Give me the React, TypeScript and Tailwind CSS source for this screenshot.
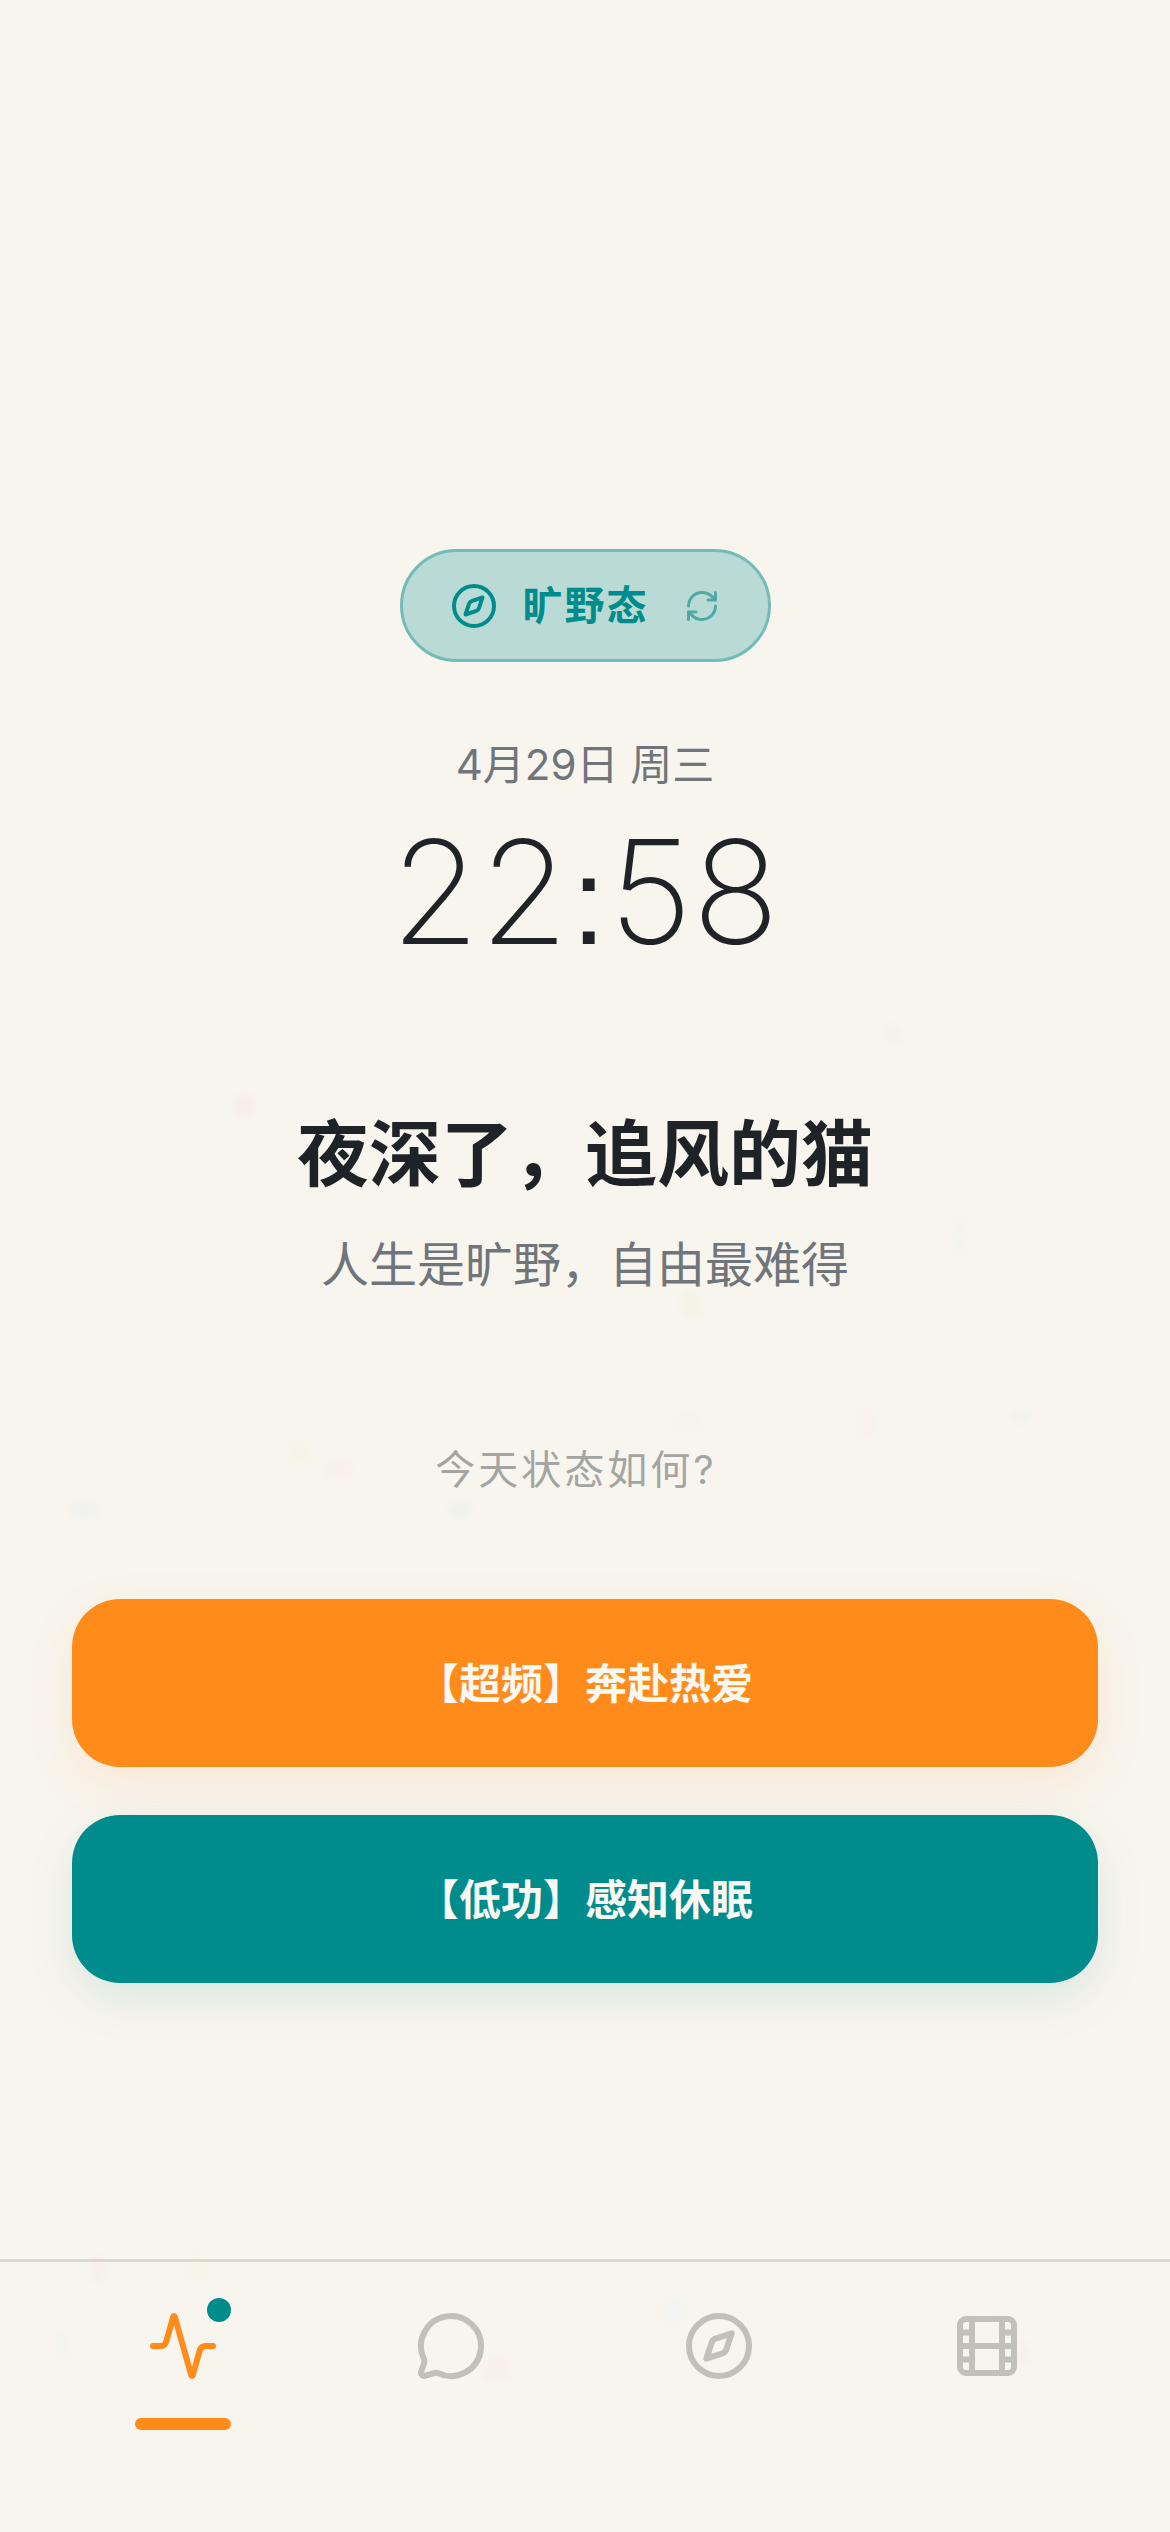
import { Activity, Compass, Film, MessageCircle, RefreshCw } from "lucide-react";

const specks = [
  "left-[234px] top-[1094px] h-[22px] w-[20px] bg-[#f8eee8]",
  "left-[886px] top-[1024px] h-[20px] w-[18px] bg-[#f3f2ed]",
  "left-[954px] top-[1218px] h-[36px] w-[12px] bg-[#f4f3ee]",
  "left-[680px] top-[1293px] h-[24px] w-[22px] bg-[#f5f2e7]",
  "left-[677px] top-[1410px] h-[23px] w-[23px] bg-[#f4f3ee]",
  "left-[860px] top-[1407px] h-[30px] w-[13px] bg-[#f8f1ec]",
  "left-[1008px] top-[1410px] h-[14px] w-[24px] bg-[#f3f3ee]",
  "left-[286px] top-[1443px] h-[20px] w-[25px] bg-[#f7f4e7]",
  "left-[325px] top-[1462px] h-[16px] w-[27px] bg-[#f8f0ea]",
  "left-[70px] top-[1502px] h-[16px] w-[28px] bg-[#f1f2ed]",
  "left-[448px] top-[1502px] h-[16px] w-[24px] bg-[#f2f2ed]",
  "left-[90px] top-[2255px] h-[27px] w-[15px] bg-[#f8f0ea]",
  "left-[188px] top-[2252px] h-[28px] w-[19px] bg-[#f7f4e9]",
  "left-[58px] top-[2332px] h-[28px] w-[9px] bg-[#f2f4ed]",
  "left-[483px] top-[2358px] h-[24px] w-[26px] bg-[#f8f0ea]",
  "left-[661px] top-[2297px] h-[26px] w-[24px] bg-[#f3f4f0]",
  "left-[1018px] top-[2343px] h-[19px] w-[12px] bg-[#f8f0ea]",
];

const navIcons = [Activity, MessageCircle, Compass, Film];

export default function App() {
  return (
    <div className="relative flex h-[2532px] w-full flex-col overflow-hidden bg-[#f8f5ee] font-['Inter','Noto_Sans_CJK_SC',sans-serif]">
      {specks.map((speck) => (
        <div key={speck} className={`absolute rounded-full blur-[2px] ${speck}`} />
      ))}

      <main className="relative flex flex-1 flex-col items-center pt-[549px]">
        <div className="flex h-[113px] w-[371px] items-center rounded-full border-[3px] border-[#73bbb7] bg-[#b9dad5] pl-[47px]">
          <Compass className="h-[48px] w-[48px] text-[#008c8c]" strokeWidth={2} />
          <span className="ml-[25px] text-[40px] leading-none font-bold tracking-[2px] text-[#008c8c]">旷野态</span>
          <RefreshCw className="ml-[35px] h-[36px] w-[36px] text-[#4fa9a6]" strokeWidth={2} />
        </div>

        <div className="mt-[78px] text-[42px] leading-[50px] text-[#6f757a]">4月29日 周三</div>
        <div className="mt-[22px] h-[160px] text-[144px] leading-[160px] font-[250] text-[#1f2328]">
          22<span className="mx-[3px] font-['Liberation_Sans'] text-[124px] font-normal">:</span>58
        </div>

        <h1 className="mt-[137px] text-[72px] leading-[90px] font-bold text-[#1f2328]">夜深了，追风的猫</h1>
        <p className="mt-[34px] text-[48px] leading-[64px] text-[#6f757a]">人生是旷野，自由最难得</p>

        <p className="mt-[148px] pr-[18px] text-[40px] leading-[50px] tracking-[3px] text-[#a3a5a3]">今天状态如何?</p>

        <div className="mt-[104px] flex w-full flex-col gap-[48px] px-[72px]">
          <button
            type="button"
            className="h-[168px] rounded-[48px] bg-[#ff8b1a] text-[42px] font-semibold text-[#faf8f2] shadow-[0_16px_48px_rgba(255,139,26,0.12)]"
          >
            【超频】奔赴热爱
          </button>
          <button
            type="button"
            className="h-[168px] rounded-[48px] bg-[#008c8c] text-[42px] font-semibold text-[#faf8f2] shadow-[0_16px_48px_rgba(0,140,140,0.12)]"
          >
            【低功】感知休眠
          </button>
        </div>
      </main>

      <nav className="relative grid h-[273px] grid-cols-4 border-t-[3px] border-[#dcd8cf] px-[49px]">
        {navIcons.map((Icon, i) => (
          <div key={i} className="relative flex flex-col items-center pt-[48px]">
            <Icon
              className={`h-[72px] w-[72px] ${i === 0 ? "text-[#ff8b1a]" : "text-[#c1c0bb]"}`}
              strokeWidth={2}
            />
            {i === 0 ? (
              <>
                <span className="absolute top-[36px] left-[158px] h-[24px] w-[24px] rounded-full bg-[#008c8c]" />
                <span className="mt-[36px] h-[12px] w-[96px] rounded-full bg-[#ff8b1a]" />
              </>
            ) : null}
          </div>
        ))}
      </nav>
    </div>
  );
}
